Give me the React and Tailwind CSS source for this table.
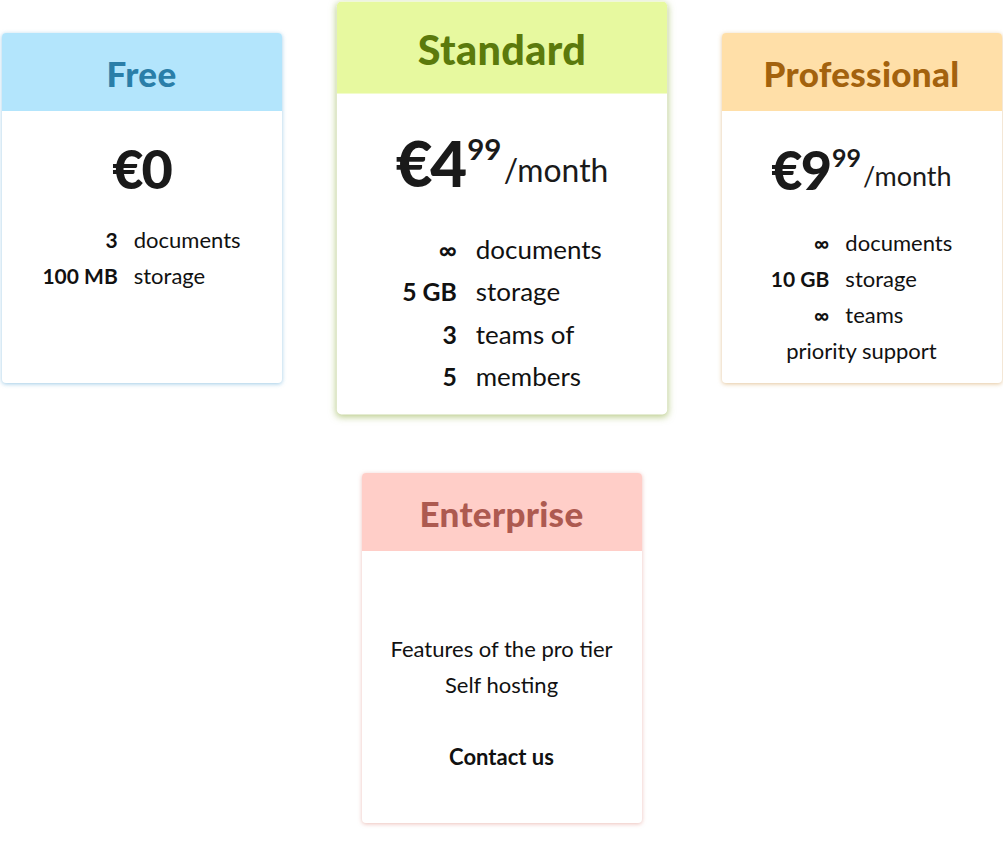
import React from "react";

const font = { fontFamily: "Lato, 'Noto Sans', sans-serif" };

function Card({ title, headerCls, titleCls, shadowCls, children, scale }) {
  return (
    <div
      className={`w-[280px] h-[350px] bg-white rounded-[4px] overflow-hidden flex flex-col ${shadowCls} ${scale ? "scale-[1.18]" : ""}`}
    >
      <div className={`h-[78px] shrink-0 flex items-center justify-center pt-[3px] ${headerCls}`}>
        <span className={`text-[35px] font-black tracking-[0.3px] ${titleCls}`}>{title}</span>
      </div>
      <div className="flex-1 flex flex-col items-center text-[#111] text-[22px]">{children}</div>
    </div>
  );
}

function Price({ main, cents }) {
  return (
    <div className="mt-[28px] h-[60px] flex items-center justify-center">
      <span className="text-[54px] font-black leading-none text-[#1a1a1a] tracking-[-2px]">{main}</span>
      {cents && (
        <>
          <span className="text-[25px] font-bold leading-none self-start mt-[5px] ml-[2px] text-[#1a1a1a]">{cents}</span>
          <span className="text-[27px] leading-none mt-[10px] ml-[2px] text-[#1a1a1a]">/month</span>
        </>
      )}
    </div>
  );
}

function Features({ rows, extra, mt }) {
  return (
    <div className={`${mt} grid grid-cols-[auto_auto] gap-x-[16px] leading-[36px]`}>
      {rows.map(([a, b], i) => (
        <React.Fragment key={i}>
          <span className="text-right font-bold text-[21px]">{a}</span>
          <span>{b}</span>
        </React.Fragment>
      ))}
      {extra && <span className="col-span-2 text-center">{extra}</span>}
    </div>
  );
}

export default function App() {
  return (
    <div style={font} className="w-[1003px] min-h-[849px] bg-white pt-[33px]">
      <div className="flex flex-wrap justify-center gap-x-[80px] gap-y-[90px] w-[1003px]">
        <Card
          title="Free"
          headerCls="bg-[#b3e5fc]"
          titleCls="text-[#2a7ea8]"
          shadowCls="shadow-[0_1px_4px_rgba(80,160,210,0.55)]"
        >
          <Price main="€0" />
          <Features
            mt="mt-[23px]"
            rows={[
              ["3", "documents"],
              ["100 MB", "storage"],
            ]}
          />
        </Card>
        <Card
          title="Standard"
          headerCls="bg-[#e7f99f]"
          titleCls="text-[#5b7a0c]"
          shadowCls="shadow-[0_2px_6px_rgba(140,170,60,0.6)]"
          scale
        >
          <div className="pt-[1px] flex flex-col items-center">
            <Price main="€4" cents="99" />
            <Features
              mt="mt-[25px]"
              rows={[
                ["∞", "documents"],
                ["5 GB", "storage"],
                ["3", "teams of"],
                ["5", "members"],
              ]}
            />
          </div>
        </Card>
        <Card
          title="Professional"
          headerCls="bg-[#ffdfa8]"
          titleCls="text-[#a3620e]"
          shadowCls="shadow-[0_1px_4px_rgba(210,160,90,0.6)]"
        >
          <div className="pt-[1px] flex flex-col items-center">
            <Price main="€9" cents="99" />
            <Features
              mt="mt-[25px]"
              rows={[
                ["∞", "documents"],
                ["10 GB", "storage"],
                ["∞", "teams"],
              ]}
              extra="priority support"
            />
          </div>
        </Card>
        <Card
          title="Enterprise"
          headerCls="bg-[#ffcec8]"
          titleCls="text-[#ad5a50]"
          shadowCls="shadow-[0_1px_4px_rgba(220,140,130,0.55)]"
        >
          <div className="mt-[80px] leading-[36px] text-center">
            <div>Features of the pro tier</div>
            <div>Self hosting</div>
            <div className="h-[36px]" />
            <div className="font-bold">Contact us</div>
          </div>
        </Card>
      </div>
    </div>
  );
}
